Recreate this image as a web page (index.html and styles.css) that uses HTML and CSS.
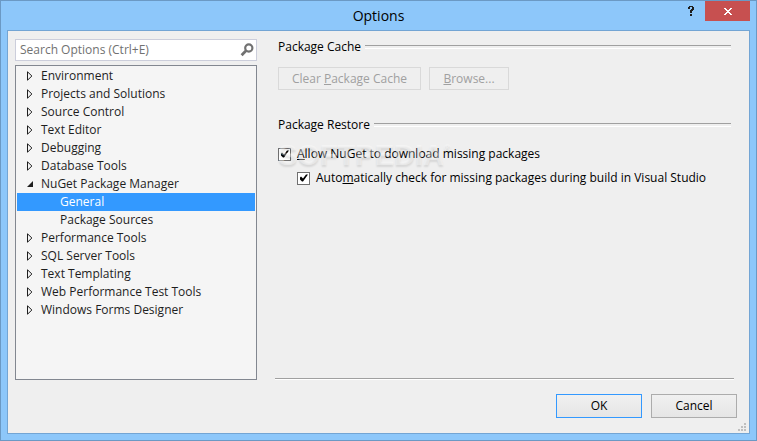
FILE: index.html
```html
<!DOCTYPE html>
<html lang="en">
<head>
    <meta charset="UTF-8">
    <meta name="viewport" content="width=device-width, initial-scale=1.0">
    <title>Options</title>
    <link rel="stylesheet" href="styles.css">
</head>
<body>
    <svg class="defs" aria-hidden="true">
        <symbol id="closed" viewBox="0 0 6 10">
            <path d="M.5 .8v8.4L4.9 5z" fill="none" stroke="#1e1e1e"/>
        </symbol>
        <symbol id="open" viewBox="0 0 6 6">
            <path d="M6 0v6H0z" fill="#1e1e1e"/>
        </symbol>
    </svg>
    <header class="title-bar">
        <h1 class="title">Options</h1>
        <div class="title-buttons">
            <button class="help-btn" type="button" aria-label="Help">
                <svg width="6" height="10" viewBox="0 0 6 10" shape-rendering="crispEdges"><path d="M1 0h4v1h1v3H5v1H4v2H2V4h1V3h1V1H2v2H0V1h1zM2 8h2v2H2z" fill="#1e1e1e"/></svg>
            </button>
            <button class="close-btn" type="button" aria-label="Close">
                <svg width="8" height="7" viewBox="0 0 8 7" shape-rendering="crispEdges"><path d="M0 0h2v1h1v1h2V1h1V0h2v1H7v1H6v1H5v1h1v1h1v1h1v1H6V6H5V5H3v1H2v1H0V6h1V5h1V4h1V3H2V2H1V1H0z" fill="#fff"/></svg>
            </button>
        </div>
    </header>
    <main class="client">
        <div class="content">
            <nav class="sidebar">
                <form class="search" onsubmit="return false;">
                    <input type="text" class="search-input" aria-label="Search Options" placeholder="Search Options (Ctrl+E)">
                    <button class="search-btn" type="submit" aria-label="Search">
                        <svg width="14" height="14" viewBox="0 0 14 14" fill="none" stroke="#717171"><circle cx="8.8" cy="5" r="3.6" stroke-width="2.2"/><path d="M6.2 7.6L1.6 12.2" stroke-width="2.8"/></svg>
                    </button>
                </form>
                <ul class="tree">
                    <li><a href="#"><svg class="closed"><use href="#closed"/></svg>Environment</a></li>
                    <li><a href="#"><svg class="closed"><use href="#closed"/></svg>Projects and Solutions</a></li>
                    <li><a href="#"><svg class="closed"><use href="#closed"/></svg>Source Control</a></li>
                    <li><a href="#"><svg class="closed"><use href="#closed"/></svg>Text Editor</a></li>
                    <li><a href="#"><svg class="closed"><use href="#closed"/></svg>Debugging</a></li>
                    <li><a href="#"><svg class="closed"><use href="#closed"/></svg>Database Tools</a></li>
                    <li>
                        <a href="#"><svg class="open"><use href="#open"/></svg>NuGet Package Manager</a>
                        <ul class="branch">
                            <li><a href="#" class="selected">General</a></li>
                            <li><a href="#">Package Sources</a></li>
                        </ul>
                    </li>
                    <li><a href="#"><svg class="closed"><use href="#closed"/></svg>Performance Tools</a></li>
                    <li><a href="#"><svg class="closed"><use href="#closed"/></svg>SQL Server Tools</a></li>
                    <li><a href="#"><svg class="closed"><use href="#closed"/></svg>Text Templating</a></li>
                    <li><a href="#"><svg class="closed"><use href="#closed"/></svg>Web Performance Test Tools</a></li>
                    <li><a href="#"><svg class="closed"><use href="#closed"/></svg>Windows Forms Designer</a></li>
                </ul>
            </nav>
            <div class="page">
                <section class="group">
                    <h2 class="group-title">Package Cache</h2>
                    <div class="group-buttons">
                        <button class="clear-btn" type="button" disabled>Clear <u>P</u>ackage Cache</button>
                        <button class="browse-btn" type="button" disabled><u>B</u>rowse...</button>
                    </div>
                </section>
                <section class="group">
                    <h2 class="group-title">Package Restore</h2>
                    <div class="checks">
                        <label class="check"><input type="checkbox" checked><span><u>A</u>llow NuGet to download missing packages</span></label>
                        <label class="check nested"><input type="checkbox" checked><span>Auto<u>m</u>atically check for missing packages during build in Visual Studio</span></label>
                        <div class="watermark">SOFTPEDIA<sup>®</sup></div>
                    </div>
                </section>
            </div>
        </div>
        <footer class="actions">
            <button class="btn default" type="button">OK</button>
            <button class="btn" type="button">Cancel</button>
        </footer>
        <svg class="grip" width="8" height="8" viewBox="0 0 8 8" aria-hidden="true"><path d="M6 0h2v2H6zM3 3h2v2H3zM6 3h2v2H6zM0 6h2v2H0zM3 6h2v2H3zM6 6h2v2H6z" fill="#bfbfbf"/></svg>
    </main>
</body>
</html>
```
FILE: styles.css
```css
* {
    margin: 0;
    padding: 0;
    box-sizing: border-box;
}
body {
    min-height: 100vh;
    display: flex;
    flex-direction: column;
    padding: 0 6px 6px;
    border: 1px solid #6b99c4;
    background-color: #8dc7fa;
    color: #000;
    font-family: "Open Sans", "Noto Sans", sans-serif;
    font-size: 12px;
    line-height: 18px;
}
button, input {
    font: inherit;
    color: inherit;
}
ul {
    list-style: none;
}
.defs {
    display: none;
}

/* title bar */
.title-bar {
    display: grid;
    grid-template-columns: 1fr auto 1fr;
    height: 29px;
}
.title {
    grid-column: 2;
    font-size: 14px;
    font-weight: normal;
    line-height: 29px;
}
.title-buttons {
    display: flex;
    justify-content: flex-end;
    align-items: flex-start;
}
.title-buttons button {
    height: 20px;
    border: none;
    background: none;
    display: flex;
    align-items: center;
    justify-content: center;
}
.title-buttons .help-btn {
    width: 28px;
}
.title-buttons .close-btn {
    width: 45px;
    background-color: #c75050;
}

/* client area */
.client {
    position: relative;
    flex: 1;
    display: flex;
    flex-direction: column;
    gap: 14px;
    padding: 8px 12px 15px 7px;
    border: 1px solid #73a5d4;
    background-color: #efefef;
}
.content {
    flex: 1;
    display: flex;
    gap: 18px;
}
.sidebar {
    width: 242px;
    display: flex;
    flex-direction: column;
    gap: 4px;
}
.search {
    display: flex;
    height: 22px;
    border: 1px solid #cccedb;
    background-color: #fff;
}
.search-input {
    flex: 1;
    min-width: 0;
    padding: 0 4px;
    border: none;
    outline: none;
    background: none;
}
.search-input::placeholder {
    color: #717171;
}
.search-btn {
    width: 18px;
    border: none;
    background: none;
    display: flex;
    align-items: center;
    justify-content: center;
}
.tree {
    flex: 1;
    padding: 1px;
    border: 1px solid #828790;
    background-color: #f5f5f5;
}
.tree a {
    display: flex;
    align-items: center;
    height: 18px;
    color: #1e1e1e;
    text-decoration: none;
}
.tree svg {
    width: 6px;
    margin: 0 8px 0 10px;
}
.closed {
    height: 10px;
}
.open {
    height: 6px;
}
.branch a {
    padding-left: 43px;
}
.tree .selected {
    background-color: #3399ff;
    color: #fff;
}

/* options page */
.page {
    flex: 1;
    margin: 0 3px 1px 0;
    padding: 0 3px;
    display: flex;
    flex-direction: column;
    gap: 27px;
    border-bottom: 1px solid #a0a0a0;
    box-shadow: 0 1px #fff;
}
.group-title {
    display: flex;
    align-items: center;
    gap: 4px;
    font-size: 12px;
    font-weight: normal;
    line-height: 16px;
}
.group-title::after {
    content: '';
    flex: 1;
    height: 2px;
    border-top: 1px solid #a0a0a0;
    border-bottom: 1px solid #fff;
}
.group-buttons {
    display: flex;
    gap: 8px;
    margin-top: 12px;
}
.group-buttons button {
    height: 23px;
    border: 1px solid #d9d9d9;
    background-color: #efefef;
    color: #a0a0a0;
    line-height: 20px;
}
.clear-btn {
    width: 143px;
}
.browse-btn {
    width: 80px;
}
.checks {
    position: relative;
    display: flex;
    flex-direction: column;
    gap: 6px;
    margin-top: 12px;
}
.check {
    display: flex;
    align-items: center;
    gap: 6px;
}
.check.nested {
    margin-left: 19px;
}
.check input {
    appearance: none;
    width: 13px;
    height: 13px;
    border: 1px solid #707070;
    background-color: #fff;
}
.check input:checked::before {
    content: '';
    display: block;
    height: 11px;
    background-color: #000;
    clip-path: polygon(2px 5px, 3px 4px, 5px 6px, 8px 2px, 10px 2px, 5px 9px, 4px 9px, 2px 7px);
}
.watermark {
    position: absolute;
    top: -6px;
    left: 0;
    color: rgba(255, 255, 255, 0.4);
    font-family: "Liberation Sans", sans-serif;
    font-size: 29px;
    font-weight: bold;
    line-height: 32px;
    text-shadow: 0 2px 2px rgba(0, 0, 0, 0.1);
    pointer-events: none;
}
.watermark sup {
    font-size: 9px;
    line-height: 9px;
    vertical-align: 14px;
}

/* dialog buttons */
.actions {
    display: flex;
    justify-content: flex-end;
    gap: 9px;
}
.btn {
    width: 86px;
    height: 24px;
    border: 1px solid #acacac;
    background: linear-gradient(#f0f0f0, #e5e5e5);
    line-height: 20px;
}
.btn.default {
    border-color: #3399ff;
}
.grip {
    position: absolute;
    right: 3px;
    bottom: 2px;
}
```
